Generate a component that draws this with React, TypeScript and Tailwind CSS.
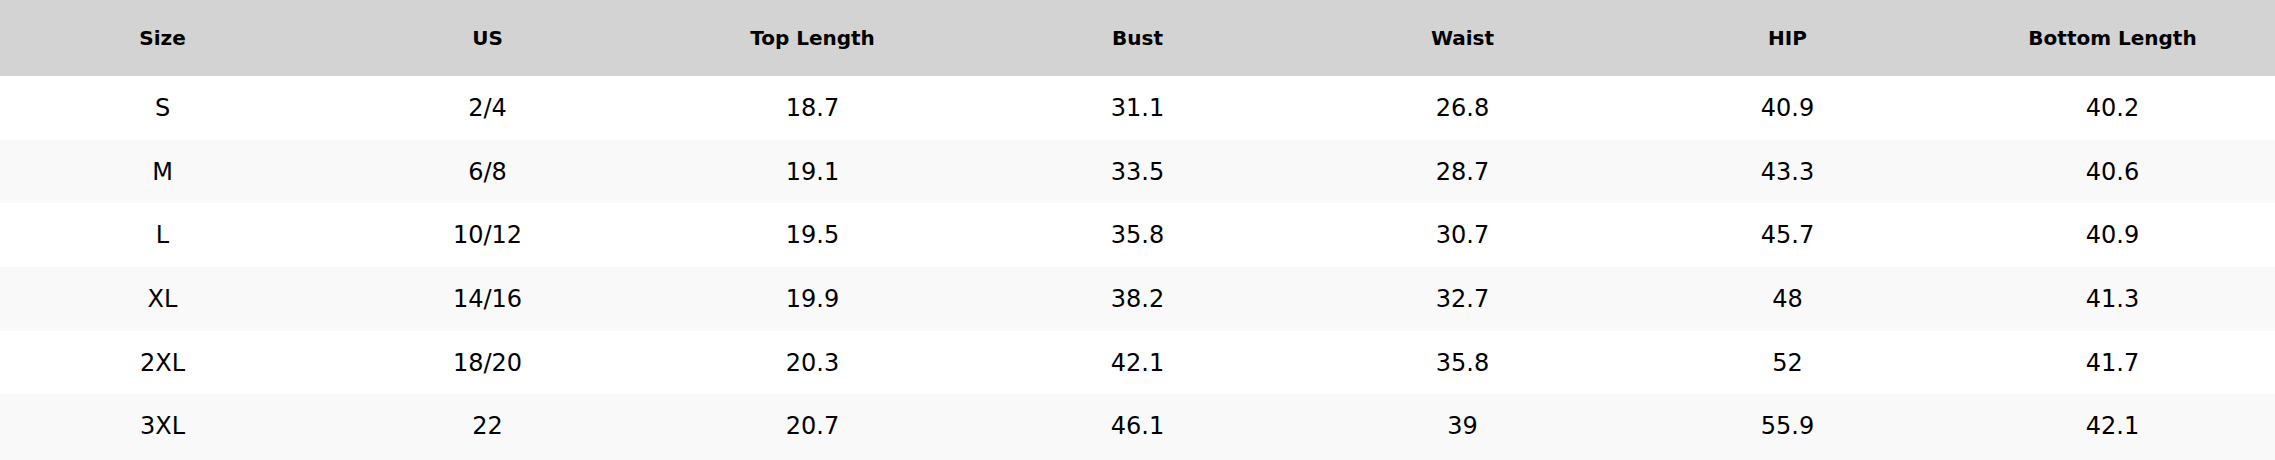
const headers = ["Size", "US", "Top Length", "Bust", "Waist", "HIP", "Bottom Length"];

const rows = [
  ["S", "2/4", "18.7", "31.1", "26.8", "40.9", "40.2"],
  ["M", "6/8", "19.1", "33.5", "28.7", "43.3", "40.6"],
  ["L", "10/12", "19.5", "35.8", "30.7", "45.7", "40.9"],
  ["XL", "14/16", "19.9", "38.2", "32.7", "48", "41.3"],
  ["2XL", "18/20", "20.3", "42.1", "35.8", "52", "41.7"],
  ["3XL", "22", "20.7", "46.1", "39", "55.9", "42.1"],
];

export default function App() {
  return (
    <div className="w-full min-h-[460px] bg-[#f9f9f9] text-black font-['DejaVu_Sans',sans-serif]">
      <div className="grid grid-cols-7 h-[76px] bg-[#d3d3d3] items-center">
        {headers.map((h) => (
          <div key={h} className="text-center text-[20px] leading-none font-bold">
            {h}
          </div>
        ))}
      </div>
      {rows.map((row, i) => (
        <div
          key={row[0]}
          className={`grid grid-cols-7 h-[63.7px] items-center ${i % 2 === 1 ? "bg-[#f9f9f9]" : "bg-white"}`}
        >
          {row.map((cell, j) => (
            <div key={j} className="text-center text-[24px] leading-none">
              {cell}
            </div>
          ))}
        </div>
      ))}
    </div>
  );
}
